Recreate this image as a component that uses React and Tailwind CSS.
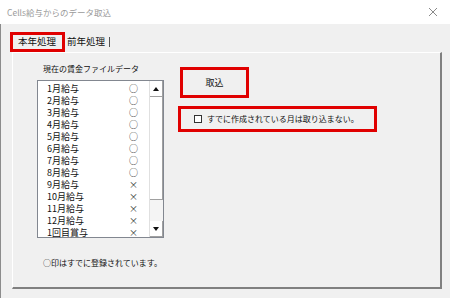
import React from "react";

const items = [
  { name: "1月給与", done: true },
  { name: "2月給与", done: true },
  { name: "3月給与", done: true },
  { name: "4月給与", done: true },
  { name: "5月給与", done: true },
  { name: "6月給与", done: true },
  { name: "7月給与", done: true },
  { name: "8月給与", done: true },
  { name: "9月給与", done: false },
  { name: "10月給与", done: false },
  { name: "11月給与", done: false },
  { name: "12月給与", done: false },
  { name: "1回目賞与", done: false },
];

const font = {
  fontFamily: '"Noto Sans CJK JP", "Liberation Sans", sans-serif',
};

const App = () => {
  return (
    <div
      className="w-[450px] h-[298px] bg-[#f0f0f0] flex flex-col overflow-hidden text-[#111]"
      style={font}
    >
      {/* Title bar */}
      <div className="h-[24px] bg-white flex items-center justify-between pl-[7px] pr-[12px] shrink-0">
        <span className="text-[8.5px] text-[#9a9a9a] leading-none">
          Cells給与からのデータ取込
        </span>
        <svg width="10" height="10" viewBox="0 0 10 10">
          <path d="M1 1L9 9M9 1L1 9" stroke="#8a8a8a" strokeWidth="1" />
        </svg>
      </div>

      <div className="flex-1 flex flex-col border-l border-[#8c8c8c]">
        {/* Tabs */}
        <div className="flex items-end h-[28px] pl-[9px]">
          <div className="w-[55px] h-[20px] border-[3px] border-[#e00000] flex items-center pl-[5px] text-[9.5px] leading-none">
            本年処理
          </div>
          <div className="h-[20px] flex items-center pl-[2px] text-[9.5px] leading-none">
            前年処理
            <span className="ml-[4px] w-px h-[10px] bg-[#555]" />
          </div>
        </div>

        {/* Panel */}
        <div className="ml-[11px] w-[430px] h-[237px] border-t border-l border-white border-r-2 border-b-2 border-r-[#808080] border-b-[#808080] flex">
          {/* Left column */}
          <div className="pl-[24px] pt-[10px] flex flex-col">
            <div className="pl-[6px] text-[8px] leading-none h-[12px] flex items-center">
              現在の賃金ファイルデータ
            </div>
            <div className="mt-[5px] w-[127px] h-[158px] border border-[#828790] bg-white flex">
              <div className="flex-1 pl-[9px] pr-[11px] pt-[1px]">
                {items.map((it) => (
                  <div
                    key={it.name}
                    className="h-[12px] flex items-center justify-between text-[9px] leading-none"
                  >
                    <span>{it.name}</span>
                    <span className="text-[9px] text-[#333]">
                      {it.done ? "○" : "×"}
                    </span>
                  </div>
                ))}
              </div>
              {/* Scrollbar */}
              <div className="w-[14px] flex flex-col bg-[#f4f4f4] border-l border-[#e0e0e0]">
                <div className="h-[16px] bg-white border-r border-b border-[#a0a0a0] flex items-center justify-center">
                  <svg width="6" height="4" viewBox="0 0 6 4">
                    <path d="M0 4L3 0L6 4Z" fill="#111" />
                  </svg>
                </div>
                <div className="h-[103px] bg-white border-r border-b border-[#a0a0a0]" />
                <div className="flex-1" />
                <div className="h-[16px] bg-white border-r border-b border-[#a0a0a0] flex items-center justify-center">
                  <svg width="6" height="4" viewBox="0 0 6 4">
                    <path d="M0 0L6 0L3 4Z" fill="#111" />
                  </svg>
                </div>
              </div>
            </div>
            <div className="mt-[21px] pl-[6px] text-[8px] leading-none">
              ○印はすでに登録されています。
            </div>
          </div>

          {/* Right column */}
          <div className="pl-[14px] pt-[14px] flex flex-col">
            <div className="ml-[2px] w-[69px] h-[31px] border-[3px] border-[#e00000] flex items-center justify-center text-[9px] leading-none">
              取込
            </div>
            <div className="mt-[8px] w-[199px] h-[26px] border-[3px] border-[#e00000] flex items-center pl-[13px]">
              <span className="w-[8px] h-[8px] border border-[#333] bg-white" />
              <span className="ml-[5px] text-[8px] leading-none">
                すでに作成されている月は取り込まない。
              </span>
            </div>
          </div>
        </div>
      </div>
    </div>
  );
};

export default App;
